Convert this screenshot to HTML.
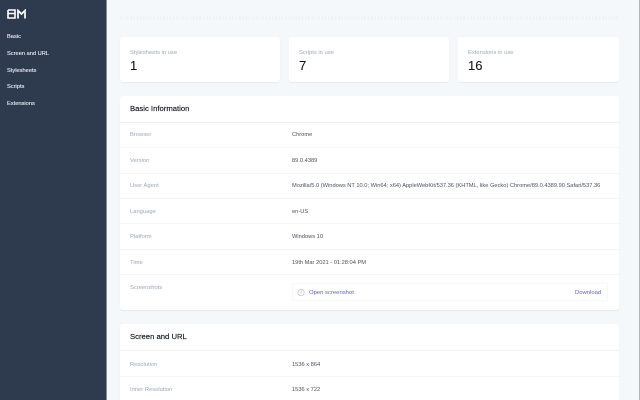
<!DOCTYPE html>
<html><head><meta charset="utf-8"><style>
html,body{margin:0;padding:0;width:640px;height:400px;overflow:hidden;background:#f5f8fb;font-family:"Liberation Sans",sans-serif}
#w{position:relative;width:640px;height:400px;overflow:hidden}
.a{position:absolute;white-space:nowrap}
#side{left:0;top:0;width:106px;height:400px;background:#2e3a4e;border-right:1px solid #8a8f96}
#bar{left:639px;top:0;width:1px;height:400px;background:#b4b6b8}
.n{left:7px;font-size:5.7px;line-height:8px;color:#eef1f6;font-weight:400;-webkit-text-stroke:.1px #eef1f6}
.c{background:#fff;border-radius:3px;box-shadow:0 1px 1px #e6eaee}
.l{left:130px;font-size:5.8px;line-height:8px;color:#9aa8bb}
.v{left:292px;font-size:5.7px;line-height:8px;color:#4a5060}
.h{left:130px;font-size:7.7px;line-height:10px;color:#10151f;-webkit-text-stroke:.15px #10151f}
.s{left:120px;width:499px;height:1px;background:#f4f6f9}
.cl{font-size:5.8px;line-height:8px;color:#9aa8bb}
.num{font-size:13px;line-height:16px;color:#10151f;-webkit-text-stroke:.1px #10151f}
.lk{font-size:5.9px;line-height:8px;color:#5b5fd6}
</style></head><body><div id="w">
<div class="a" id="side"></div>
<svg class="a" style="left:7px;top:9px" width="20" height="10" viewBox="0 0 20 10"><path d="M1 1H8V4.500H1M8 4.500V9H1V1" fill="none" stroke="#fff" stroke-width="1.6"/><path d="M11 9.500V1.500L14.500 5L18 1.500V9.500" fill="none" stroke="#fff" stroke-width="1.7"/></svg>
<div class="a n" style="top:33px">Basic</div>
<div class="a n" style="top:50px">Screen and URL</div>
<div class="a n" style="top:67px">Stylesheets</div>
<div class="a n" style="top:83px">Scripts</div>
<div class="a n" style="top:100px">Extensions</div>
<div class="a" id="bar"></div>
<div class="a" style="left:120px;top:16px;width:499px;height:4px;background:repeating-linear-gradient(90deg,#eff3f6 0 2px,#f5f8fb 2px 3.300px)"></div>

<div class="a c" style="left:120px;top:37px;width:160px;height:45px"></div>
<div class="a c" style="left:289px;top:37px;width:160px;height:45px"></div>
<div class="a c" style="left:458px;top:37px;width:161px;height:45px"></div>
<div class="a cl" style="left:130px;top:49px">Stylesheets in use</div>
<div class="a cl" style="left:299px;top:49px">Scripts in use</div>
<div class="a cl" style="left:468px;top:49px">Extensions in use</div>
<div class="a num" style="left:130px;top:58px">1</div>
<div class="a num" style="left:299px;top:58px">7</div>
<div class="a num" style="left:468px;top:58px">16</div>

<div class="a c" style="left:120px;top:96px;width:499px;height:214px"></div>
<div class="a h" style="top:104px">Basic Information</div>
<div class="a s" style="top:122px;background:#eef1f4"></div>
<div class="a s" style="top:147px"></div>
<div class="a s" style="top:173px"></div>
<div class="a s" style="top:198px"></div>
<div class="a s" style="top:223px"></div>
<div class="a s" style="top:249px"></div>
<div class="a s" style="top:274px"></div>
<div class="a l" style="top:131px">Browser</div><div class="a v" style="top:131px">Chrome</div>
<div class="a l" style="top:157px">Version</div><div class="a v" style="top:157px">89.0.4389</div>
<div class="a l" style="top:182px">User Agent</div><div class="a v" style="top:182px">Mozilla/5.0 (Windows NT 10.0; Win64; x64) AppleWebKit/537.36 (KHTML, like Gecko) Chrome/89.0.4389.90 Safari/537.36</div>
<div class="a l" style="top:208px">Language</div><div class="a v" style="top:208px">en-US</div>
<div class="a l" style="top:233px">Platform</div><div class="a v" style="top:233px">Windows 10</div>
<div class="a l" style="top:259px">Time</div><div class="a v" style="top:259px">19th Mar 2021 - 01:28:04 PM</div>
<div class="a l" style="top:284px">Screenshots</div>
<div class="a" style="left:292px;top:283px;width:316px;height:18px;border:1px solid #f6f8fa;border-radius:2px;box-sizing:border-box"></div>
<svg class="a" style="left:297px;top:288px" width="8" height="9" viewBox="0 0 8 9"><circle cx="4" cy="4.500" r="3.200" fill="none" stroke="#c3cad6" stroke-width=".9"/><path d="M4 2.500V5.500" stroke="#c3cad6" stroke-width="1"/></svg>
<div class="a lk" style="left:309px;top:289px">Open screenshot</div>
<div class="a lk" style="left:575px;top:289px">Download</div>

<div class="a c" style="left:120px;top:324px;width:499px;height:90px"></div>
<div class="a h" style="top:332px">Screen and URL</div>
<div class="a s" style="top:350px;background:#eef1f4"></div>
<div class="a s" style="top:376px"></div>
<div class="a l" style="top:361px">Resolution</div><div class="a v" style="top:361px">1536 x 864</div>
<div class="a l" style="top:386px">Inner Resolution</div><div class="a v" style="top:386px">1536 x 722</div>
</div></body></html>
